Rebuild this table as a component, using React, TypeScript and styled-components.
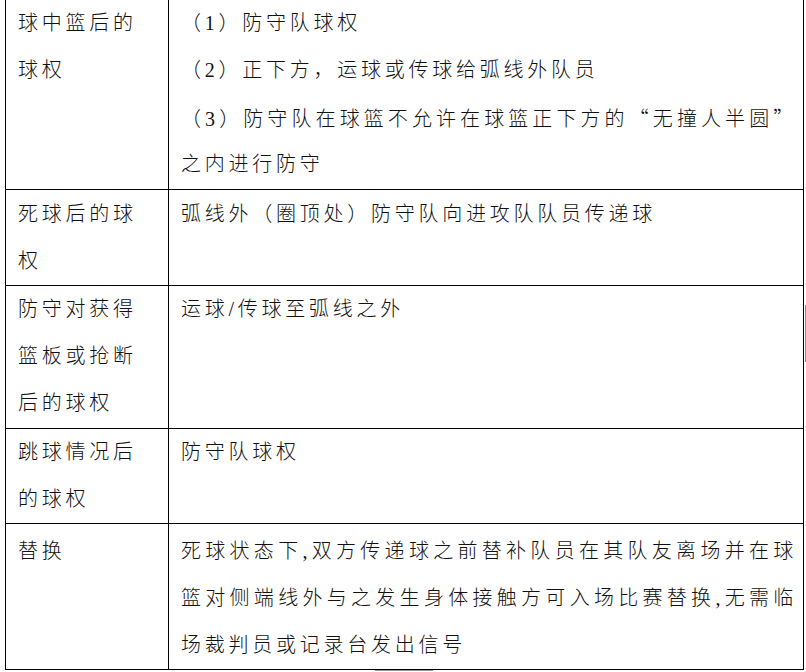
import React from 'react'
import styled, { createGlobalStyle } from 'styled-components'

const GlobalStyle = createGlobalStyle`
  html, body {
    margin: 0;
    padding: 0;
    background: #ffffff;
  }
  body {
    font-family: "Liberation Serif", "Noto Sans CJK SC", serif;
    color: #111;
  }
`

const Page = styled.div`
  position: relative;
  width: 806px;
  height: 672px;
  overflow: hidden;
  background: #fff;
`

const Table = styled.div`
  margin-left: 5px;
  width: 799px;
  box-sizing: border-box;
  border-left: 1px solid #000;
  border-right: 1px solid #000;
`

const Row = styled.div<{ $height: number; $padTop?: number }>`
  display: grid;
  grid-template-columns: 162px 1fr;
  height: ${({ $height }) => $height}px;
  box-sizing: border-box;
  border-bottom: 1px solid #000;

  > div {
    padding-top: ${({ $padTop }) => $padTop ?? 0}px;
  }
`

const LabelCell = styled.div`
  box-sizing: border-box;
  padding-left: 12px;
`

const BodyCell = styled.div`
  box-sizing: border-box;
  border-left: 1px solid #000;
  padding-left: 12px;
  padding-right: 6px;
`

const Line = styled.div<{ $justify?: boolean }>`
  font-size: 20px;
  font-weight: 300;
  line-height: 47px;
  height: 47px;
  letter-spacing: 3.75px;
  white-space: nowrap;
  text-align: ${({ $justify }) => ($justify ? 'justify' : 'left')};
  text-align-last: ${({ $justify }) => ($justify ? 'justify' : 'auto')};
  text-justify: inter-character;
`

const Quote = styled.span`
  font-family: "Noto Sans CJK SC", sans-serif;
`

const ScrollMarkV = styled.div`
  position: absolute;
  left: 805px;
  top: 305px;
  width: 1px;
  height: 57px;
  background: #8a8a8a;
`

const ScrollMarkH = styled.div`
  position: absolute;
  left: 375px;
  top: 670px;
  width: 58px;
  height: 1px;
  background: #9a9a9a;
`

type RowData = {
  height: number
  padTop?: number
  label: string[]
  body: { text: React.ReactNode; justify?: boolean }[]
}

const rows: RowData[] = [
  {
    height: 190,
    label: ['球中篮后的', '球权'],
    body: [
      { text: '（1）防守队球权' },
      { text: '（2）正下方，运球或传球给弧线外队员' },
      {
        text: (
          <>
            （3）防守队在球篮不允许在球篮正下方的<Quote>“</Quote>无撞人半圆<Quote>”</Quote>
          </>
        ),
        justify: true,
      },
      { text: '之内进行防守' },
    ],
  },
  {
    height: 96,
    padTop: 1,
    label: ['死球后的球', '权'],
    body: [{ text: '弧线外（圈顶处）防守队向进攻队队员传递球' }],
  },
  {
    height: 143,
    label: ['防守对获得', '篮板或抢断', '后的球权'],
    body: [{ text: '运球/传球至弧线之外' }],
  },
  {
    height: 95,
    label: ['跳球情况后', '的球权'],
    body: [{ text: '防守队球权' }],
  },
  {
    height: 146,
    padTop: 4,
    label: ['替换'],
    body: [
      { text: '死球状态下,双方传递球之前替补队员在其队友离场并在球', justify: true },
      { text: '篮对侧端线外与之发生身体接触方可入场比赛替换,无需临', justify: true },
      { text: '场裁判员或记录台发出信号' },
    ],
  },
]

export default function App() {
  return (
    <Page>
      <GlobalStyle />
      <Table>
        {rows.map((row, i) => (
          <Row key={i} $height={row.height} $padTop={row.padTop}>
            <LabelCell>
              {row.label.map((l, j) => (
                <Line key={j}>{l}</Line>
              ))}
            </LabelCell>
            <BodyCell>
              {row.body.map((b, j) => (
                <Line key={j} $justify={b.justify}>
                  {b.text}
                </Line>
              ))}
            </BodyCell>
          </Row>
        ))}
      </Table>
      <ScrollMarkV />
      <ScrollMarkH />
    </Page>
  )
}
